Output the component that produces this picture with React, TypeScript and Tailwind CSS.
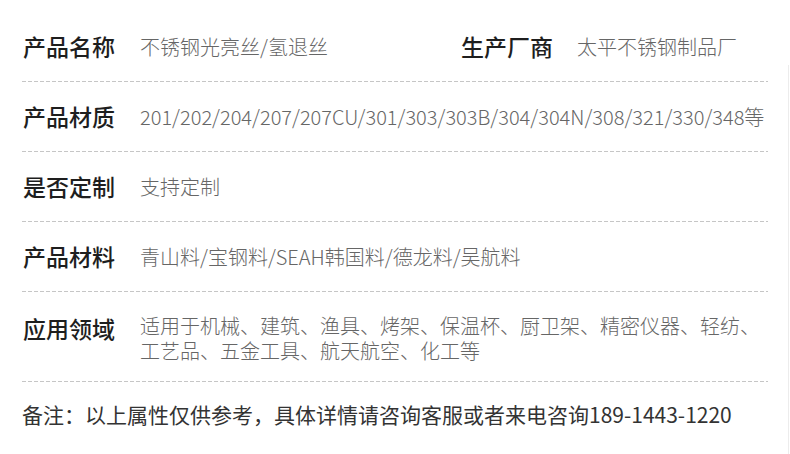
const cjk = "font-['Noto_Sans_CJK_SC','Noto_Sans',sans-serif]"

function Dash() {
  return (
    <div className="ml-[22px] w-[746px] h-px bg-[linear-gradient(to_right,#c6c6c6_4px,transparent_4px)] bg-[length:6px_1px]" />
  )
}

function Label({ children, width = 'w-[117px]' }: { children: string; width?: string }) {
  return (
    <div className={`${width} shrink-0 text-[23px] font-medium text-[#1e1e1e] leading-none`}>
      {children}
    </div>
  )
}

function Value({ children }: { children: string }) {
  return <div className="text-[20px] font-light text-[#666] whitespace-nowrap leading-none">{children}</div>
}

function Row({ label, value }: { label: string; value: string }) {
  return (
    <div className="h-[69px] pl-[23px] flex items-center">
      <Label>{label}</Label>
      <Value>{value}</Value>
    </div>
  )
}

export default function App() {
  return (
    <div className={`w-[790px] h-[454px] bg-white flex ${cjk}`}>
      <div className="w-[788px] pt-[12px]">
        <div className="h-[69px] pl-[23px] flex items-center">
          <div className="w-[438px] flex items-center">
            <Label>产品名称</Label>
            <Value>不锈钢光亮丝/氢退丝</Value>
          </div>
          <Label width="w-[116px]">生产厂商</Label>
          <Value>太平不锈钢制品厂</Value>
        </div>
        <Dash />
        <Row label="产品材质" value="201/202/204/207/207CU/301/303/303B/304/304N/308/321/330/348等" />
        <Dash />
        <Row label="是否定制" value="支持定制" />
        <Dash />
        <Row label="产品材料" value="青山料/宝钢料/SEAH韩国料/德龙料/吴航料" />
        <Dash />
        <div className="h-[89px] pl-[23px] pt-[24px] flex items-start">
          <div className="h-[25px] flex items-center">
            <Label>应用领域</Label>
          </div>
          <div className="flex flex-col gap-[5px] text-[20px] font-light text-[#666] leading-[20px] whitespace-nowrap">
            <div>适用于机械、建筑、渔具、烤架、保温杯、厨卫架、精密仪器、轻纺、</div>
            <div>工艺品、五金工具、航天航空、化工等</div>
          </div>
        </div>
        <Dash />
        <div className="h-[66px] pl-[22px] flex items-center text-[21px] text-[#333] whitespace-nowrap">
          备注：以上属性仅供参考，具体详情请咨询客服或者来电咨询189-1443-1220
        </div>
      </div>
      <div className="pt-[65px]">
        <div className="w-px h-full bg-[#ececec]" />
      </div>
    </div>
  )
}
